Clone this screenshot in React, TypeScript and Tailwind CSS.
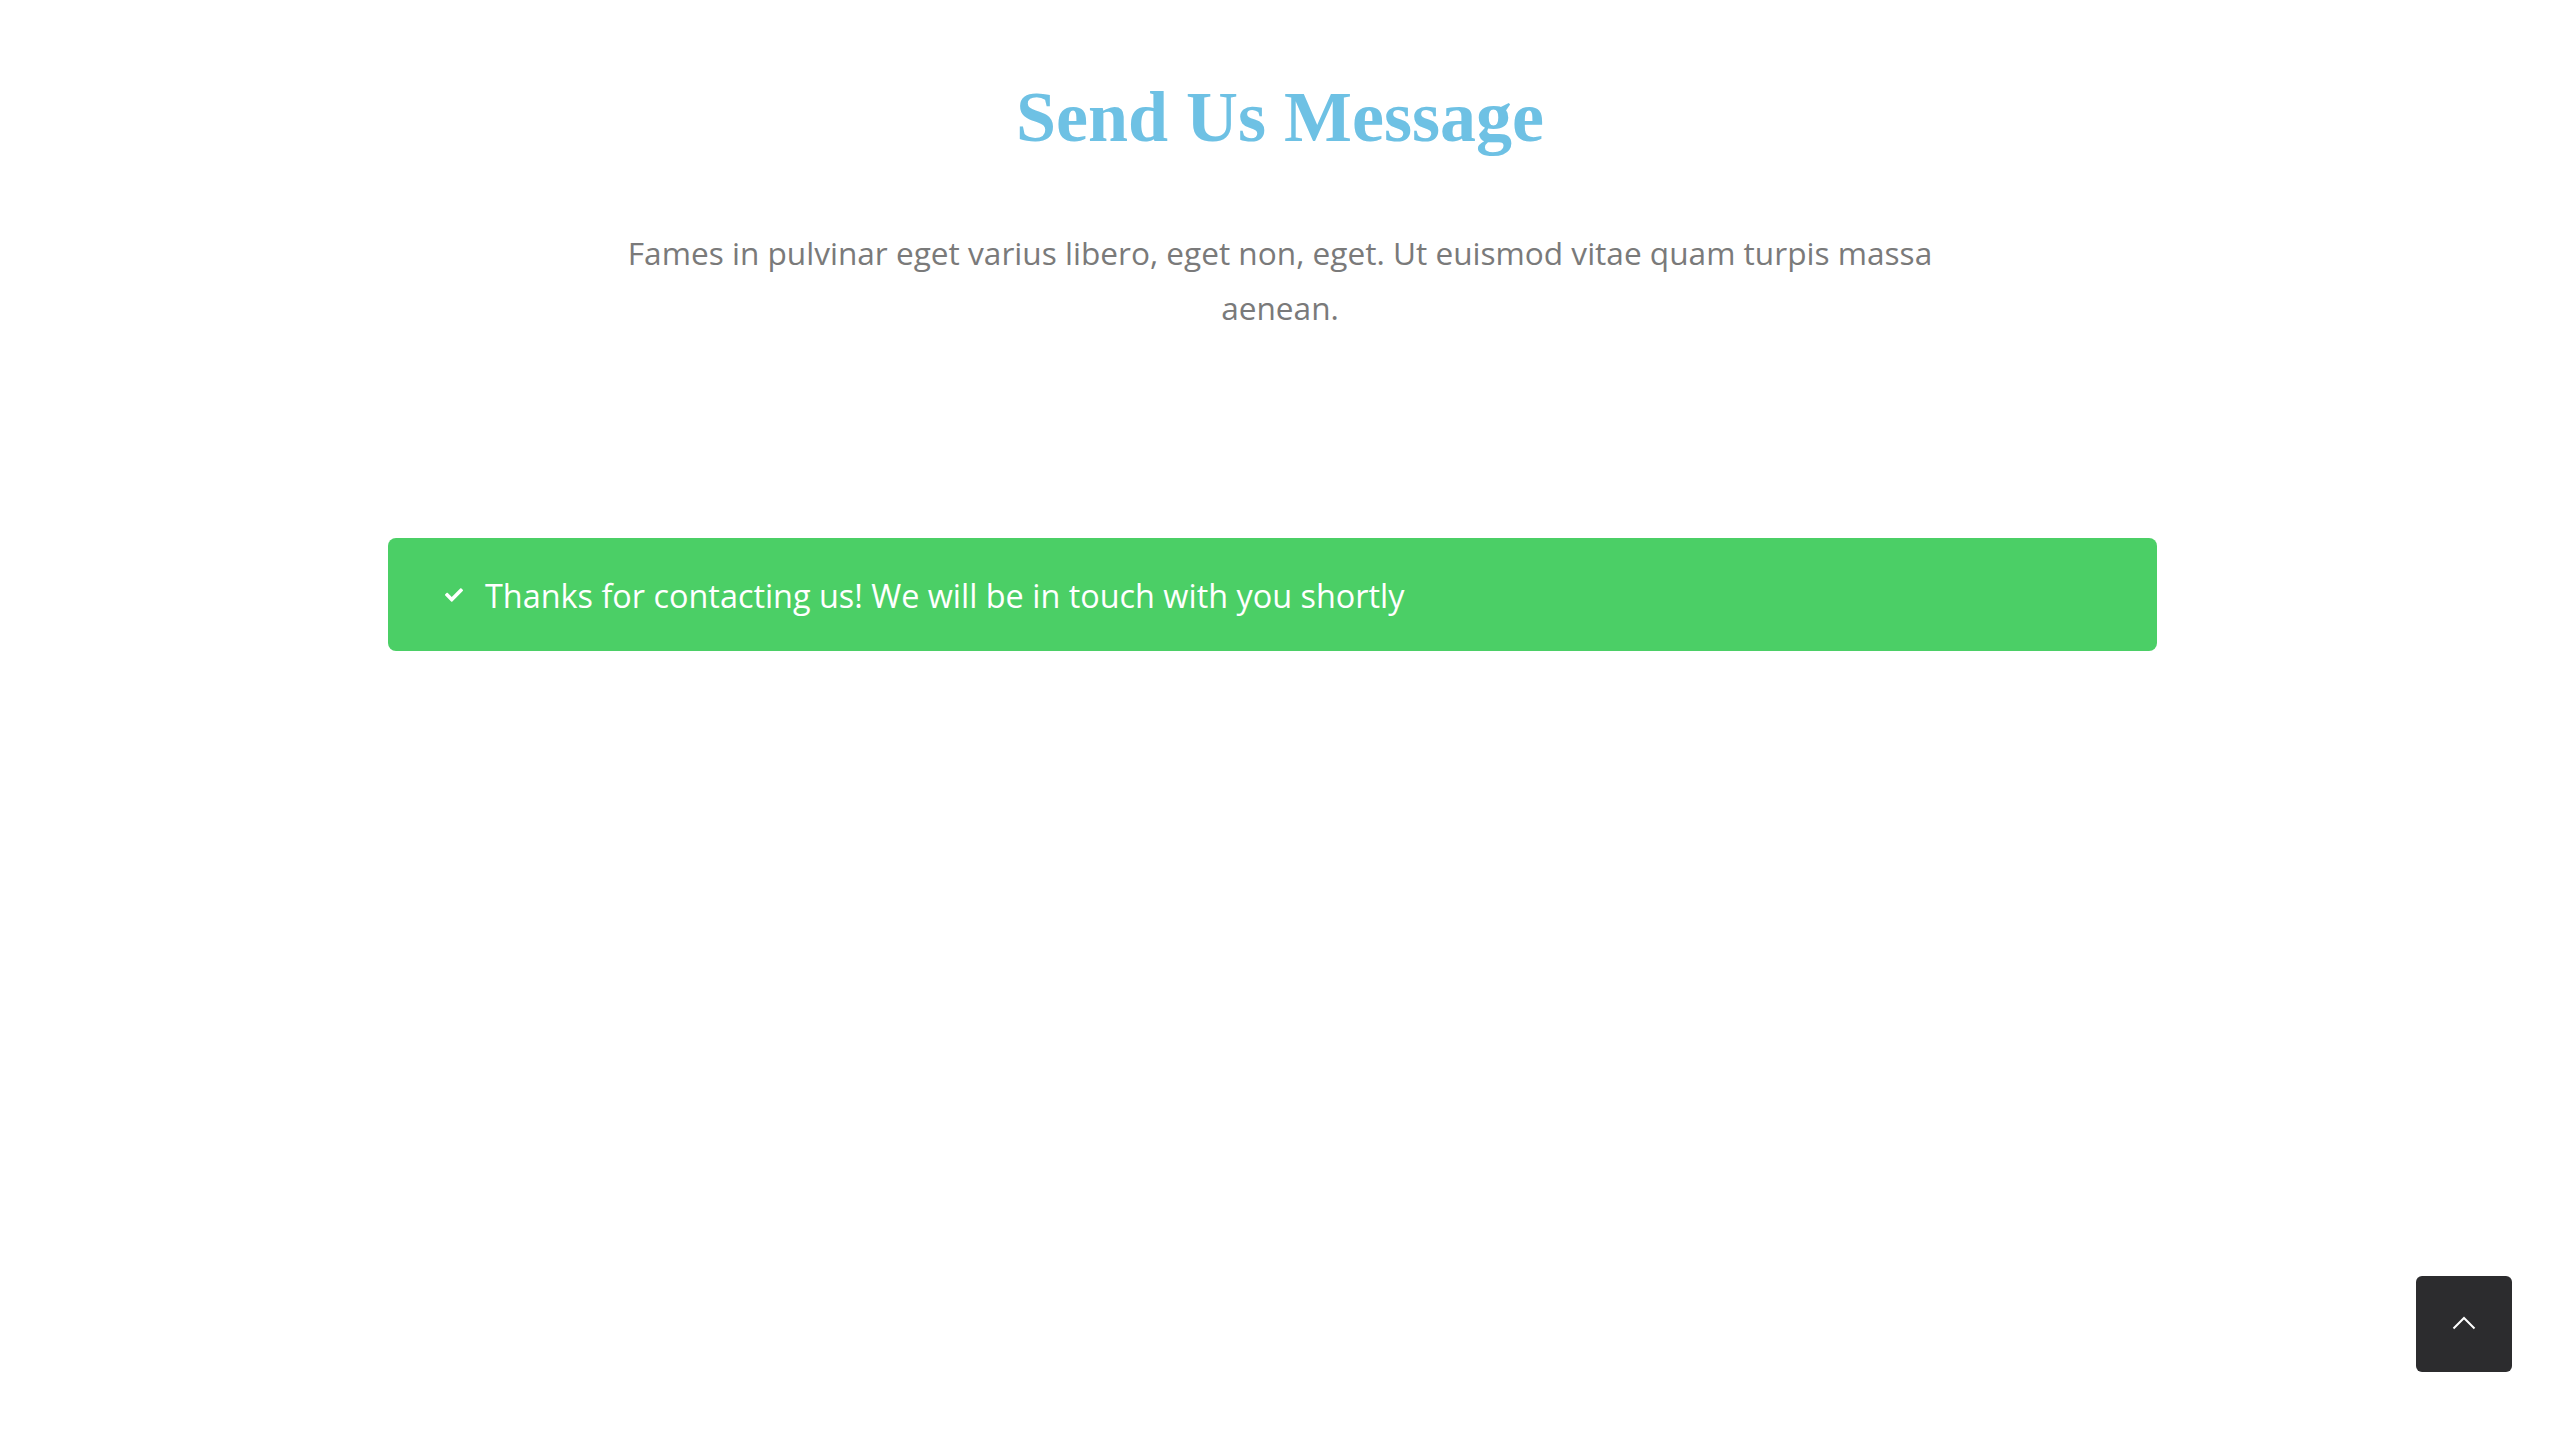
import { FaCheck } from "react-icons/fa";

function BackToTop() {
  return (
    <button className="fixed right-[48px] bottom-[68px] flex h-[96px] w-[96px] items-center justify-center rounded-[6px] bg-[#2c2c2e]">
      <svg width="24" height="14" viewBox="0 0 24 14" fill="none" className="-mt-[2px]">
        <path d="M1.5 12.5 L12 2 L22.5 12.5" stroke="#ffffff" strokeWidth="2" />
      </svg>
    </button>
  );
}

export default function App() {
  return (
    <div className="min-h-screen bg-white">
      <section className="flex flex-col items-center pt-[74px]">
        <h1 className="font-['Liberation_Serif',serif] text-[72px] font-bold leading-[1.2] text-[#6ec1e4]">
          Send Us Message
        </h1>
        <p className="mt-[65px] w-[1340px] text-center font-['Open_Sans',sans-serif] text-[31.6px] leading-[55px] text-[#7a7a7a]">
          Fames in pulvinar eget varius libero, eget non, eget. Ut euismod vitae quam turpis massa aenean.
        </p>
      </section>

      <div className="mt-[203px] ml-[388px] w-[1769px]">
        <div className="flex h-[113px] items-center gap-[22px] rounded-[8px] bg-[#4bcf66] pl-[57px] font-['Open_Sans',sans-serif] text-[32.4px] text-white">
          <FaCheck className="h-[18px] w-[18px] shrink-0" />
          <span>Thanks for contacting us! We will be in touch with you shortly</span>
        </div>
      </div>

      <BackToTop />
    </div>
  );
}
